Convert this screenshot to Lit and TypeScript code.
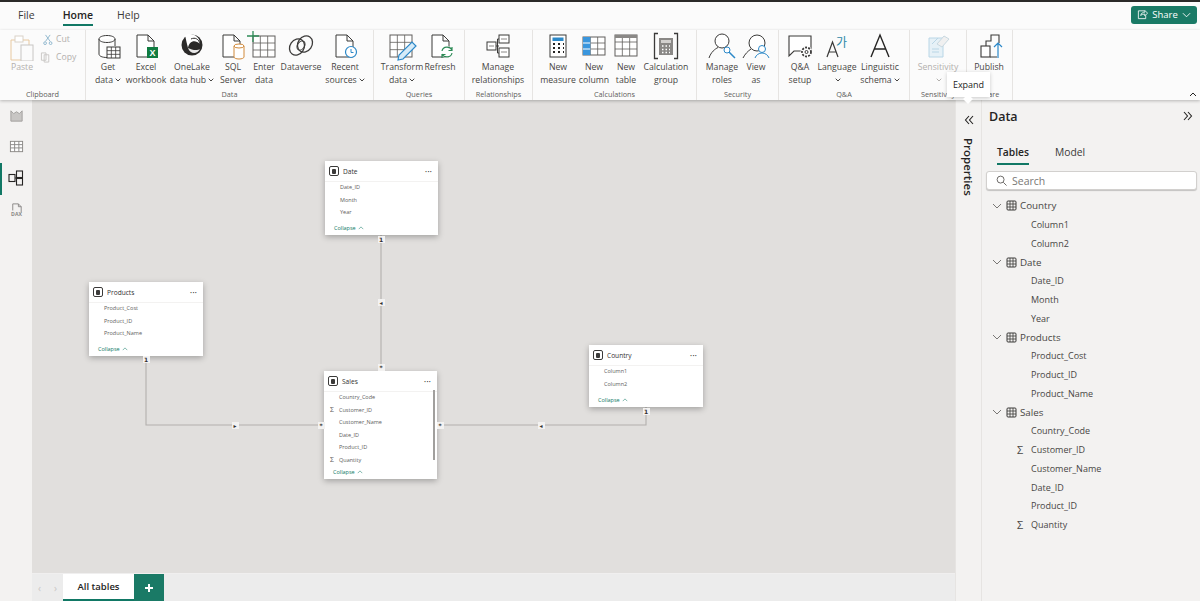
import { LitElement, html, css, svg } from "lit";
import { customElement } from "lit/decorators.js";

const D = "#3b3a39";
const G = "#8a8886";
const grid = (x: number, y: number, w: number, h: number, cols: number, rows: number, c = D, sw = 1) => {
  const parts = [svg`<rect x=${x} y=${y} width=${w} height=${h} fill="#fff" stroke=${c} stroke-width=${sw} />`];
  for (let i = 1; i < cols; i++) parts.push(svg`<path d="M${x + (w * i) / cols} ${y}v${h}" stroke=${c} stroke-width=${sw * 0.8} />`);
  for (let i = 1; i < rows; i++) parts.push(svg`<path d="M${x} ${y + (h * i) / rows}h${w}" stroke=${c} stroke-width=${sw * 0.8} />`);
  return parts;
};
const page = (x: number, y: number, w: number, h: number, c = D) =>
  svg`<path d="M${x} ${y}h${w - 6}l6 6v${h - 6}h-${w}z M${x + w - 6} ${y}v6h6" fill="#fff" stroke=${c} stroke-width="1" stroke-linejoin="round" />`;

const ic = (body: unknown) => html`<svg class="ico" viewBox="0 0 36 30" width="36" height="30" fill="none">${body}</svg>`;

const icons: Record<string, unknown> = {
  paste: ic(svg`<path d="M13 9h-6v20h11" stroke="#e8c9a0"/><rect x="11" y="5" width="8" height="6" stroke="#d9d2c8" fill="#fff"/><path d="M19 9h6v5" stroke="#e8c9a0"/><rect x="17" y="14" width="12" height="16" fill="#fbfbfb" stroke="#c8c6c4"/>`),
  get: ic(svg`<path d="M9 8v15c0 2 3 3.500 8 3.500M9 8c0-2 3.500-3.500 8-3.500s8 1.500 8 3.500v7M9 8c0 2 3.500 3.500 8 3.500s8-1.500 8-3.500" stroke=${D} fill="#fff"/>${grid(17, 16, 13, 11, 3, 3)}`),
  excel: ic(svg`${page(9, 4, 17, 22)}<rect x="19" y="16" width="11" height="11" fill="#107c41"/><text x="24.500" y="25" text-anchor="middle" font-size="9" font-weight="700" fill="#fff" font-family="Liberation Sans">X</text>`),
  onelake: ic(svg`<circle cx="18" cy="14" r="10.500" fill="#2b2a29"/><path d="M11 4c7 -3 15 1 15 9c-5-5-11-3-12 4c-1-4-2-8-3-13z" fill="#fff"/><path d="M14 17c2 6 9 7 12 1c-3 2-8 1-12-1z" fill="#e8e8e8"/><path d="M17 8c4-2 8 0 9 5" stroke="#2b2a29"/>`),
  sql: ic(svg`${page(8, 4, 17, 22)}<path d="M19 15v11c0 1 2 2 5 2s5-1 5-2v-11" fill="#fff" stroke="#d18a3a"/><ellipse cx="24" cy="15" rx="5" ry="2" fill="#fff" stroke="#d18a3a"/>`),
  enter: ic(svg`${grid(7, 5, 22, 21, 3, 3, "#605e5c")}<path d="M7 0v11M1 5h12" stroke="#2e8b57" stroke-width="1.300"/>`),
  dataverse: ic(svg`<ellipse cx="14" cy="16" rx="7" ry="8.500" transform="rotate(35 14 16)" stroke=${D} stroke-width="1.300"/><ellipse cx="22" cy="13" rx="7" ry="8.500" transform="rotate(35 22 13)" stroke=${D} stroke-width="1.300"/><ellipse cx="18" cy="14.500" rx="3.500" ry="5" transform="rotate(35 18 14.500)" stroke=${D}/>`),
  recent: ic(svg`${page(9, 4, 17, 22)}<circle cx="24" cy="21" r="5.500" fill="#fff" stroke="#2b88c8" stroke-width="1.200"/><path d="M24 18v3.500h2.500" stroke="#2b88c8"/>`),
  transform: ic(svg`${grid(6, 4, 22, 22, 3, 3, "#605e5c")}<path d="M14 29l1-5l13-13l4 4l-13 13z" fill="#d6ebf8" stroke="#2b88c8" stroke-width="1.200"/>`),
  refresh: ic(svg`${page(10, 4, 17, 22)}<circle cx="25" cy="21" r="6" fill="#fff"/><path d="M20 20c1-5 8-5 10-1M30 22c-1 5-8 5-10 1M30 16v3.500h-3.500M20 27v-3.500h3.500" stroke="#2e8b57" stroke-width="1.200"/>`),
  manage: ic(svg`<rect x="7" y="11" width="9" height="8" fill="#fff" stroke=${D}/><rect x="19" y="4" width="10" height="8" fill="#fff" stroke=${D}/><rect x="19" y="17" width="10" height="9" fill="#fff" stroke=${D}/><path d="M16 15h3M19 8h-1.500v14H19" stroke=${D}/><path d="M9 15h5M21 8h6M21 21h6" stroke=${G}/>`),
  measure: ic(svg`<rect x="10" y="4" width="16" height="22" fill="#fff" stroke=${D}/><rect x="12.500" y="6.500" width="11" height="3.500" fill="#2b88c8"/><path d="M13 13h2m3 0h2m3 0h1M13 17h2m3 0h2m3 0h1M13 21h2m3 0h2m3 0h1" stroke="#252423" stroke-width="2"/>`),
  column: ic(svg`${grid(7, 6, 22, 18, 3, 3, "#605e5c")}<rect x="7" y="6" width="7.300" height="18" fill="#3a96dd"/><path d="M7 12h7.300M7 18h7.300" stroke="#fff"/>`),
  table: ic(svg`${grid(7, 4, 22, 21, 3, 3, "#605e5c")}<rect x="7" y="4" width="22" height="3" fill="#8a8886"/>`),
  calcgroup: ic(svg`<path d="M10 2.500H6.500v25H10M26 2.500h3.500v25H26" stroke=${D} stroke-width="1.300"/><rect x="11" y="7" width="14" height="17" fill="#8a8886"/><rect x="13" y="9" width="10" height="3" fill="#d2d0ce"/><path d="M14 15h1.500m2 0h1.500m2 0h1M14 18.500h1.500m2 0h1.500m2 0h1M14 21.500h1.500m2 0h1.500m2 0h1" stroke="#fff" stroke-width="1.300"/>`),
  roles: ic(svg`<circle cx="18" cy="10" r="7" stroke=${D} fill="#fff"/><path d="M5 27c2-6 6-9 9-10.500" stroke=${D}/><circle cx="23" cy="19" r="3" stroke="#2b88c8" fill="#fff"/><path d="M25 21l6 6" stroke="#2b88c8" stroke-width="1.500"/>`),
  viewas: ic(svg`<circle cx="19" cy="12" r="8" stroke=${D} fill="#fff"/><path d="M5 27c2-4 5-7 8-9" stroke=${D}/><circle cx="24" cy="18" r="3.500" stroke="#2b88c8" fill="#fff"/><path d="M17 27c1-3 4-5 7-5s6 2 7 5" stroke="#2b88c8"/>`),
  qa: ic(svg`<path d="M7 5h22v15h-17l-5 5z" fill="#fff" stroke=${D} stroke-width="1.100"/><circle cx="24.500" cy="21" r="6" fill="#fff"/><circle cx="24.500" cy="21" r="4.500" stroke=${D} stroke-width="1.800" stroke-dasharray="2 1.200"/><circle cx="24.500" cy="21" r="1.500" stroke=${D}/>`),
  lang: ic(svg`<path d="M8 26l5.500-15l5.500 15M10 21h7" stroke=${D} stroke-width="1.200"/><text x="17" y="16" font-size="12" fill="#2b88a8" font-family="Noto Sans CJK KR">가</text>`),
  ling: ic(svg`<path d="M9 26l9-22l9 22M12.500 18h11" stroke="#252423" stroke-width="1.400"/>`),
  sens: ic(svg`<path d="M9 7h14v19h-14z" fill="#e6f1f7" stroke="#b9d6e6"/><path d="M12 13l6-6" stroke="#b9d6e6"/><path d="M17 13l7-8l5 3l-7 8z" fill="#f0f0f0" stroke="#c8d8e0"/><path d="M12 18h7M12 21h7" stroke="#b9d6e6"/>`),
  publish: ic(svg`<rect x="10" y="15" width="9" height="11" fill="#fff" stroke=${D} stroke-width="1.100"/><path d="M15 15v-5h5v-6h8v8" stroke=${D} stroke-width="1.100"/><path d="M19 26h7" stroke=${D}/><path d="M27 27v-15M23 16l4-4l4 4" stroke="#2b88c8" stroke-width="1.200"/>`),
};

type Btn = { w: number; a: string; b?: string; caret?: boolean; icon: string; off?: boolean };
type Grp = { label: string; width: number; pad: number; btns: Btn[]; clip?: boolean };

const groups: Grp[] = [
  { label: "Clipboard", width: 86, pad: 5, clip: true, btns: [{ w: 34, a: "Paste", icon: "paste", off: true }] },
  { label: "Data", width: 288, pad: 6, btns: [
    { w: 32, a: "Get", b: "data", caret: true, icon: "get" },
    { w: 44, a: "Excel", b: "workbook", icon: "excel" },
    { w: 48, a: "OneLake", b: "data hub", caret: true, icon: "onelake" },
    { w: 34, a: "SQL", b: "Server", icon: "sql" },
    { w: 28, a: "Enter", b: "data", icon: "enter" },
    { w: 46, a: "Dataverse", icon: "dataverse" },
    { w: 42, a: "Recent", b: "sources", caret: true, icon: "recent" },
  ] },
  { label: "Queries", width: 91, pad: 8, btns: [
    { w: 40, a: "Transform", b: "data", caret: true, icon: "transform" },
    { w: 36, a: "Refresh", icon: "refresh" },
  ] },
  { label: "Relationships", width: 68, pad: 3, btns: [{ w: 60, a: "Manage", b: "relationships", icon: "manage" }] },
  { label: "Calculations", width: 164, pad: 7, btns: [
    { w: 36, a: "New", b: "measure", icon: "measure" },
    { w: 36, a: "New", b: "column", icon: "column" },
    { w: 28, a: "New", b: "table", icon: "table" },
    { w: 52, a: "Calculation", b: "group", icon: "calcgroup" },
  ] },
  { label: "Security", width: 82, pad: 5, btns: [
    { w: 40, a: "Manage", b: "roles", icon: "roles" },
    { w: 28, a: "View", b: "as", icon: "viewas" },
  ] },
  { label: "Q&A", width: 131, pad: 4, btns: [
    { w: 34, a: "Q&A", b: "setup", icon: "qa" },
    { w: 40, a: "Language", b: " ", caret: true, icon: "lang" },
    { w: 46, a: "Linguistic", b: "schema", caret: true, icon: "ling" },
  ] },
  { label: "Sensitivity", width: 57, pad: 3, btns: [{ w: 50, a: "Sensitivity", b: " ", caret: true, icon: "sens", off: true }] },
  { label: "Share", width: 46, pad: 2, btns: [{ w: 40, a: "Publish", icon: "publish" }] },
];

const tree: { name: string; cols: [string, boolean?][] }[] = [
  { name: "Country", cols: [["Column1"], ["Column2"]] },
  { name: "Date", cols: [["Date_ID"], ["Month"], ["Year"]] },
  { name: "Products", cols: [["Product_Cost"], ["Product_ID"], ["Product_Name"]] },
  { name: "Sales", cols: [["Country_Code"], ["Customer_ID", true], ["Customer_Name"], ["Date_ID"], ["Product_ID"], ["Quantity", true]] },
];

const cards: { name: string; x: number; y: number; w: number; h: number; fields: [string, boolean?][]; scroll?: boolean }[] = [
  { name: "Date", x: 293, y: 61, w: 113, h: 74, fields: [["Date_ID"], ["Month"], ["Year"]] },
  { name: "Products", x: 57, y: 182, w: 114, h: 74, fields: [["Product_Cost"], ["Product_ID"], ["Product_Name"]] },
  { name: "Sales", x: 292, y: 271, w: 113, h: 108, scroll: true, fields: [["Country_Code"], ["Customer_ID", true], ["Customer_Name"], ["Date_ID"], ["Product_ID"], ["Quantity", true]] },
  { name: "Country", x: 557, y: 245, w: 114, h: 62, fields: [["Column1"], ["Column2"]] },
];

const badges: [number, number, string][] = [
  [349, 139, "1"], [349, 202, "◂"], [349, 267, "*"],
  [114, 259, "1"], [203, 325, "▸"], [289, 325, "*"],
  [408, 325, "*"], [509, 325, "◂"], [614, 311, "1"],
];

const tableIcon = html`<svg class="tico" viewBox="0 0 11 11" width="11" height="11" fill="none"><rect x="1" y="1" width="9" height="9" rx="1" stroke="#3b3a39"/><path d="M4 1v9M7 1v9M1 4h9M1 7h9" stroke="#3b3a39" stroke-width=".8"/></svg>`;
const chevDown = html`<svg viewBox="0 0 10 6" width="10" height="6" fill="none"><path d="M1 1l4 4l4-4" stroke="#797775"/></svg>`;
const dbl = (d: string) => html`<svg viewBox="0 0 12 12" width="12" height="12" fill="none"><path d=${d} stroke="#252423" stroke-width="1.100"/></svg>`;

@customElement("app-root")
export class AppRoot extends LitElement {
  static styles = css`
    :host { display: block; position: relative; width: 1200px; height: 601px; overflow: hidden; background: #f3f2f1; font-family: "Open Sans", "Noto Sans", sans-serif; color: #323130; }
    .app { display: flex; flex-direction: column; height: 601px; border-top: 2px solid #2b2a29; box-sizing: border-box; }
    .menu { display: flex; height: 28px; padding-bottom: 3px; box-sizing: border-box; background: #fbfbfb; align-items: center; font-size: 10.500px; position: relative; flex: none; }
    .mi { position: relative; color: #3b3a39; }
    .mi.file { margin-left: 18px; }
    .mi.home { margin-left: 28px; color: #252423; font-weight: 600; }
    .mi.home::after { content: ""; position: absolute; left: 0; right: 0; top: 16px; height: 2px; background: #117865; }
    .mi.help { margin-left: 24px; }
    .share { margin-left: auto; margin-right: 3px; width: 66px; height: 18px; background: #1a7a66; border-radius: 3px; color: #fff; font-size: 9.500px; display: flex; align-items: center; justify-content: center; gap: 4px; }
    .ribbon { display: flex; height: 70px; background: #fbfbfb; flex: none; position: relative; z-index: 2; box-shadow: 0 1px 3px rgba(0,0,0,.25); }
    .grp { display: flex; flex-direction: column; box-sizing: border-box; border-right: 1px solid #e6e4e2; flex: none; }
    .btns { display: flex; height: 59px; flex: none; }
    .btn { display: flex; flex-direction: column; align-items: center; flex: none; font-size: 8.700px; line-height: 12.500px; color: #484644; white-space: nowrap; }
    .btn .ico { flex: none; margin-top: 1px; }
    .btn.off { color: #b3b0ad; }
    .car { display: inline-block; margin-left: 2px; width: 6px; height: 4px; vertical-align: 1px; }
    .glab { text-align: center; font-size: 7.300px; line-height: 11px; color: #605e5c; }
    .small { display: flex; flex-direction: column; gap: 6px; padding-top: 3px; color: #b3b0ad; font-size: 8.700px; }
    .small div { display: flex; align-items: center; gap: 3px; height: 12px; }
    .small svg { width: 14px; flex: none; }
    .collapse { margin-left: auto; align-self: flex-end; margin-right: 3px; margin-bottom: 3px; }
    .body { display: flex; flex: 1; min-height: 0; }
    .rail { width: 32px; flex: none; box-sizing: border-box; position: relative; display: flex; flex-direction: column; align-items: center; padding-top: 8px; gap: 16px; background: #f3f2f1; }
    .rail .mark { position: absolute; left: 0; top: 63px; width: 2px; height: 32px; background: #117865; }
    .main { width: 923px; flex: none; display: flex; flex-direction: column; }
    .canvas { flex: 1; position: relative; background: #e1dfdd; }
    .wires { position: absolute; inset: 0; }
    .card { position: absolute; background: #fff; box-shadow: 0 2px 6px rgba(0,0,0,.28); box-sizing: border-box; display: flex; flex-direction: column; }
    .chead { display: flex; align-items: center; height: 20px; margin-bottom: -1px; padding: 0 6px 0 4px; gap: 4px; font-size: 6.600px; color: #323130; border-bottom: 1px solid #f3f2f1; flex: none; }
    .cico { width: 10px; height: 10px; border: 1px solid #3b3a39; border-radius: 2px; display: flex; align-items: center; justify-content: center; box-sizing: border-box; }
    .cico span { width: 4px; height: 5px; background: #3b3a39; border-radius: 1px; }
    .dots { margin-left: auto; font-size: 7px; letter-spacing: .3px; font-weight: 700; line-height: 7px; }
    .cfields { padding: 0 0 0 15px; flex: 1; font-size: 5.500px; color: #605e5c; }
    .cf { height: 12.500px; display: flex; align-items: center; position: relative; }
    .cf .sig { position: absolute; left: -9px; font-size: 7px; }
    .cfoot { font-size: 5.500px; color: #117865; padding: 0 0 3px 9px; height: 11px; box-sizing: border-box; display: flex; align-items: center; gap: 2px; flex: none; }
    .sb { position: absolute; right: 2px; top: 19px; width: 2px; height: 70px; background: #a19f9d; }
    .badge { position: absolute; width: 7px; height: 7px; margin: -3.500px 0 0 -3.500px; background: #f3f2f1; font-size: 6px; font-weight: 700; line-height: 7px; text-align: center; color: #323130; font-family: "DejaVu Sans", sans-serif; }
    .tabs { height: 28px; flex: none; background: #ececec; display: flex; align-items: stretch; border-top: 1px solid #f0efef; box-sizing: border-box; }
    .navs { width: 19px; display: flex; align-items: center; justify-content: space-between; padding: 0 6px; color: #c8c6c4; font-size: 10px; flex: none; }
    .tab { width: 71px; background: #fff; border-bottom: 2px solid #117865; font-size: 9.500px; font-weight: 600; color: #252423; display: flex; align-items: center; justify-content: center; box-sizing: border-box; }
    .plus { width: 30px; background: #1a7a66; color: #fff; display: flex; align-items: center; justify-content: center; }
    .props { width: 27px; flex: none; border-left: 1px solid #e6e4e2; border-right: 1px solid #e6e4e2; box-sizing: border-box; display: flex; flex-direction: column; align-items: center; padding-top: 14px; }
    .ptext { writing-mode: vertical-rl; font-size: 11.500px; font-weight: 600; color: #252423; margin-top: 12px; line-height: 13px; }
    .data { flex: 1; min-width: 0; padding: 0 3px 0 4px; }
    .dhead { display: flex; align-items: center; justify-content: space-between; height: 32px; padding: 0 3px; font-size: 12.500px; font-weight: 600; color: #252423; }
    .dtabs { display: flex; gap: 26px; padding-left: 11px; margin-top: 9px; height: 30px; font-size: 10.300px; color: #3b3a39; }
    .dtabs .t { height: 22px; line-height: 22px; }
    .dtabs .t.on { font-weight: 600; border-bottom: 2px solid #117865; height: 22px; color: #252423; }
    .search { height: 19px; background: #fff; border: 1px solid #d2d0ce; border-radius: 3px; box-shadow: 0 1px 1px rgba(0,0,0,.2); display: flex; align-items: center; gap: 5px; padding-left: 9px; font-size: 10.500px; color: #797775; box-sizing: border-box; }
    .tree { margin-top: 6.500px; font-size: 9px; color: #484644; }
    .row { height: 18.750px; display: flex; align-items: center; }
    .row.tb { padding-left: 6px; gap: 4px; font-size: 9.800px; }
    .row.tb span { margin-left: -1px; }
    .row.cl { padding-left: 45px; position: relative; }
    .row.cl .sig { position: absolute; left: 31px; font-size: 11px; }
    .tip { position: absolute; left: 947px; top: 72px; width: 43px; height: 25px; background: #fff; z-index: 5; font-size: 9px; color: #252423; display: flex; align-items: center; justify-content: center; box-shadow: 0 1px 4px rgba(0,0,0,.2); }
    .tip::after { content: ""; position: absolute; left: 16px; top: 22px; width: 10px; height: 10px; background: #fff; transform: rotate(45deg) scale(.7); }
  `;

  private renderBtn(b: Btn) {
    return html`<div class="btn ${b.off ? "off" : ""}" style="width:${b.w}px">
      ${icons[b.icon]}
      <span>${b.a}</span>
      <span>${b.b ?? ""}${b.caret ? html`<svg class="car" viewBox="0 0 6 4" fill="none"><path d="M.7.7L3 3L5.300.7" stroke="currentColor" stroke-width="1"/></svg>` : ""}</span>
    </div>`;
  }

  render() {
    return html`
      <div class="app">
        <div class="menu">
          <span class="mi file">File</span><span class="mi home">Home</span><span class="mi help">Help</span>
          <div class="share">
            <svg viewBox="0 0 12 12" width="11" height="11" fill="none"><path d="M8 2H1.500v8.500h8V7M4 7c.5-2.500 2.500-3.500 4.500-3.500V1.500l3 3l-3 3V5.500C6.500 5.500 5 6 4 7z" stroke="#fff" stroke-width=".9"/></svg>
            <span>Share</span>
            <svg viewBox="0 0 10 6" width="9" height="6" fill="none"><path d="M1 1l4 4l4-4" stroke="#fff"/></svg>
          </div>
        </div>
        <div class="ribbon">
          ${groups.map((g) => html`<div class="grp" style="width:${g.width}px">
            <div class="btns" style="padding-left:${g.pad}px">
              ${g.btns.map((b) => this.renderBtn(b))}
              ${g.clip ? html`<div class="small">
                <div><svg viewBox="0 0 14 12" height="11" fill="none"><path d="M6.500 1l5 7M11.500 1l-5 7" stroke="#8ab4cc"/><circle cx="6" cy="10" r="1.500" stroke="#8ab4cc"/><circle cx="12" cy="10" r="1.500" stroke="#8ab4cc"/></svg>Cut</div>
                <div><svg viewBox="0 0 14 12" height="11" fill="none"><path d="M2 1h5v8H2zM5 3h5v8H5z" fill="#fbfbfb" stroke="#c8c6c4"/></svg>Copy</div>
              </div>` : ""}
            </div>
            <div class="glab">${g.label}</div>
          </div>`)}
          <svg class="collapse" viewBox="0 0 8 5" width="8" height="5" fill="none"><path d="M1 4l3-3l3 3" stroke="#252423"/></svg>
        </div>
        <div class="body">
          <div class="rail">
            <div class="mark"></div>
            <svg viewBox="0 0 16 16" width="15" height="15" fill="none"><path d="M2 14V3l3 3l3-2l3 2l3-3v11z" fill="#c8c6c4" stroke="#a19f9d"/></svg>
            <svg viewBox="0 0 16 16" width="15" height="15" fill="none"><rect x="1.500" y="2.500" width="13" height="11" fill="#fff" stroke="#8a8886"/><path d="M1.500 6h13M1.500 9.500h13M6 2.500v11M10.500 2.500v11" stroke="#8a8886"/></svg>
            <svg viewBox="0 0 16 16" width="16" height="16" fill="none"><rect x="1" y="4.500" width="6" height="7" stroke="#252423" stroke-width="1.100"/><rect x="8.500" y="1" width="6" height="6.500" stroke="#252423" stroke-width="1.100"/><rect x="8.500" y="8.500" width="6" height="6.500" stroke="#252423" stroke-width="1.100"/><path d="M7 8h1.500" stroke="#252423"/></svg>
            <svg viewBox="0 0 16 16" width="15" height="15" fill="none"><path d="M4 9V2h6l3 3v6M10 2v3h3" stroke="#8a8886"/><text x="8" y="15" text-anchor="middle" font-size="5.500" font-weight="700" fill="#8a8886" font-family="Open Sans">DAX</text></svg>
          </div>
          <div class="main">
            <div class="canvas">
              <svg class="wires" viewBox="0 0 923 473" width="923" height="473" fill="none">
                <path d="M349 135V271M114 256V325H292M405 325H614V307" stroke="#b3b0ad" stroke-width="1.100"/>
              </svg>
              ${cards.map((c) => html`<div class="card" style="left:${c.x}px;top:${c.y}px;width:${c.w}px;height:${c.h}px">
                <div class="chead"><span class="cico"><span></span></span><span>${c.name}</span><span class="dots">···</span></div>
                <div class="cfields">
                  ${c.fields.map(([f, s]) => html`<div class="cf">${s ? html`<span class="sig">Σ</span>` : ""}${f}</div>`)}
                </div>
                <div class="cfoot">Collapse <svg viewBox="0 0 8 5" width="6" height="4" fill="none"><path d="M1 4l3-3l3 3" stroke="#117865" stroke-width=".7"/></svg></div>
                ${c.scroll ? html`<div class="sb"></div>` : ""}
              </div>`)}
              ${badges.map(([x, y, t]) => html`<div class="badge" style="left:${x}px;top:${y}px">${t}</div>`)}
            </div>
            <div class="tabs">
              <div class="navs"><span>‹</span><span>›</span></div>
              <div class="tab">All tables</div>
              <div class="plus"><svg viewBox="0 0 10 10" width="10" height="10" fill="none"><path d="M5 1v8M1 5h8" stroke="#fff" stroke-width="2"/></svg></div>
            </div>
          </div>
          <div class="props">
            ${dbl("M6 2L2.500 6L6 10M10 2L6.500 6L10 10")}
            <span class="ptext">Properties</span>
          </div>
          <div class="data">
            <div class="dhead"><span>Data</span>${dbl("M2 2l3.500 4L2 10M6 2l3.500 4L6 10")}</div>
            <div class="dtabs"><span class="t on">Tables</span><span class="t">Model</span></div>
            <div class="search"><svg viewBox="0 0 12 12" width="11" height="11" fill="none"><circle cx="5" cy="5" r="3.800" stroke="#605e5c"/><path d="M8 8l3.500 3.500" stroke="#605e5c"/></svg>Search</div>
            <div class="tree">
              ${tree.map((t) => html`
                <div class="row tb">${chevDown}${tableIcon}<span>${t.name}</span></div>
                ${t.cols.map(([c, s]) => html`<div class="row cl">${s ? html`<span class="sig">Σ</span>` : ""}<span>${c}</span></div>`)}
              `)}
            </div>
          </div>
        </div>
      </div>
      <div class="tip">Expand</div>
    `;
  }
}
